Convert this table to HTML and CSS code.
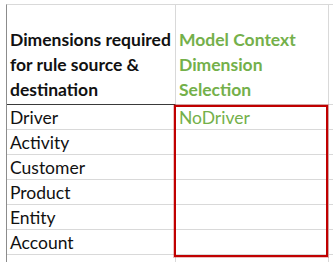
FILE: index.html
```html
<!DOCTYPE html>
<html lang="en">
<head>
<meta charset="utf-8">
<title>Dimensions</title>
<link rel="stylesheet" href="styles.css">
</head>
<body>
<div class="sheet">
  <div class="grid">
    <div class="cell head">Dimensions required for rule source &amp; destination</div>
    <div class="cell head green">Model Context Dimension Selection</div>
    <div class="cell edge head-edge"></div>

    <div class="cell">Driver</div>
    <div class="cell green light">NoDriver</div>
    <div class="cell edge"></div>

    <div class="cell">Activity</div>
    <div class="cell"></div>
    <div class="cell edge"></div>

    <div class="cell">Customer</div>
    <div class="cell"></div>
    <div class="cell edge"></div>

    <div class="cell">Product</div>
    <div class="cell"></div>
    <div class="cell edge"></div>

    <div class="cell">Entity</div>
    <div class="cell"></div>
    <div class="cell edge"></div>

    <div class="cell">Account</div>
    <div class="cell"></div>
    <div class="cell edge"></div>

    <div class="cell tail"></div>
    <div class="cell tail"></div>
    <div class="cell edge tail"></div>
  </div>
  <div class="selection"></div>
</div>
</body>
</html>
```

FILE: styles.css
```css
html, body {
  margin: 0;
  padding: 0;
  background: #ffffff;
  overflow: hidden;
}

body {
  width: 333px;
  height: 262px;
  font-family: "Lato", "Open Sans", sans-serif;
  color: #111111;
}

.sheet {
  position: relative;
  padding: 4px 0 0 6px;
}

/* worksheet grid: label column, selection column, sliver of the next column */
.grid {
  display: grid;
  grid-template-columns: 169px 153px 5px;
  grid-template-rows: 100px repeat(6, 25px) 7px;
  border-top: 1px solid #d9d9d9;
  border-left: 1px solid #8c8c8c;
}

.cell {
  box-sizing: border-box;
  border-right: 1px solid #d9d9d9;
  border-bottom: 1px solid #d9d9d9;
  padding: 0 0 1px 3px;
  font-size: 17.5px;
  line-height: 21px;
  display: flex;
  align-items: flex-end;
  white-space: nowrap;
}

.head {
  font-weight: 700;
  white-space: normal;
  line-height: 25px;
  padding-bottom: 2px;
  border-bottom: 1px solid #3a3a3a;
}

.head.green {
  border-bottom-color: #d9d9d9;
}

.head-edge {
  border-bottom-color: #d9d9d9;
}

.green {
  color: #74b04a;
}

.light {
  font-weight: 400;
}

.edge {
  border-right: none;
}

.tail {
  border-bottom: none;
}

/* red outline around the selected range */
.selection {
  position: absolute;
  left: 174px;
  top: 105px;
  width: 154px;
  height: 152px;
  box-sizing: border-box;
  border: 2px solid #c00000;
  box-shadow: 0 0 0 1px rgba(192, 0, 0, 0.25);
}
```
